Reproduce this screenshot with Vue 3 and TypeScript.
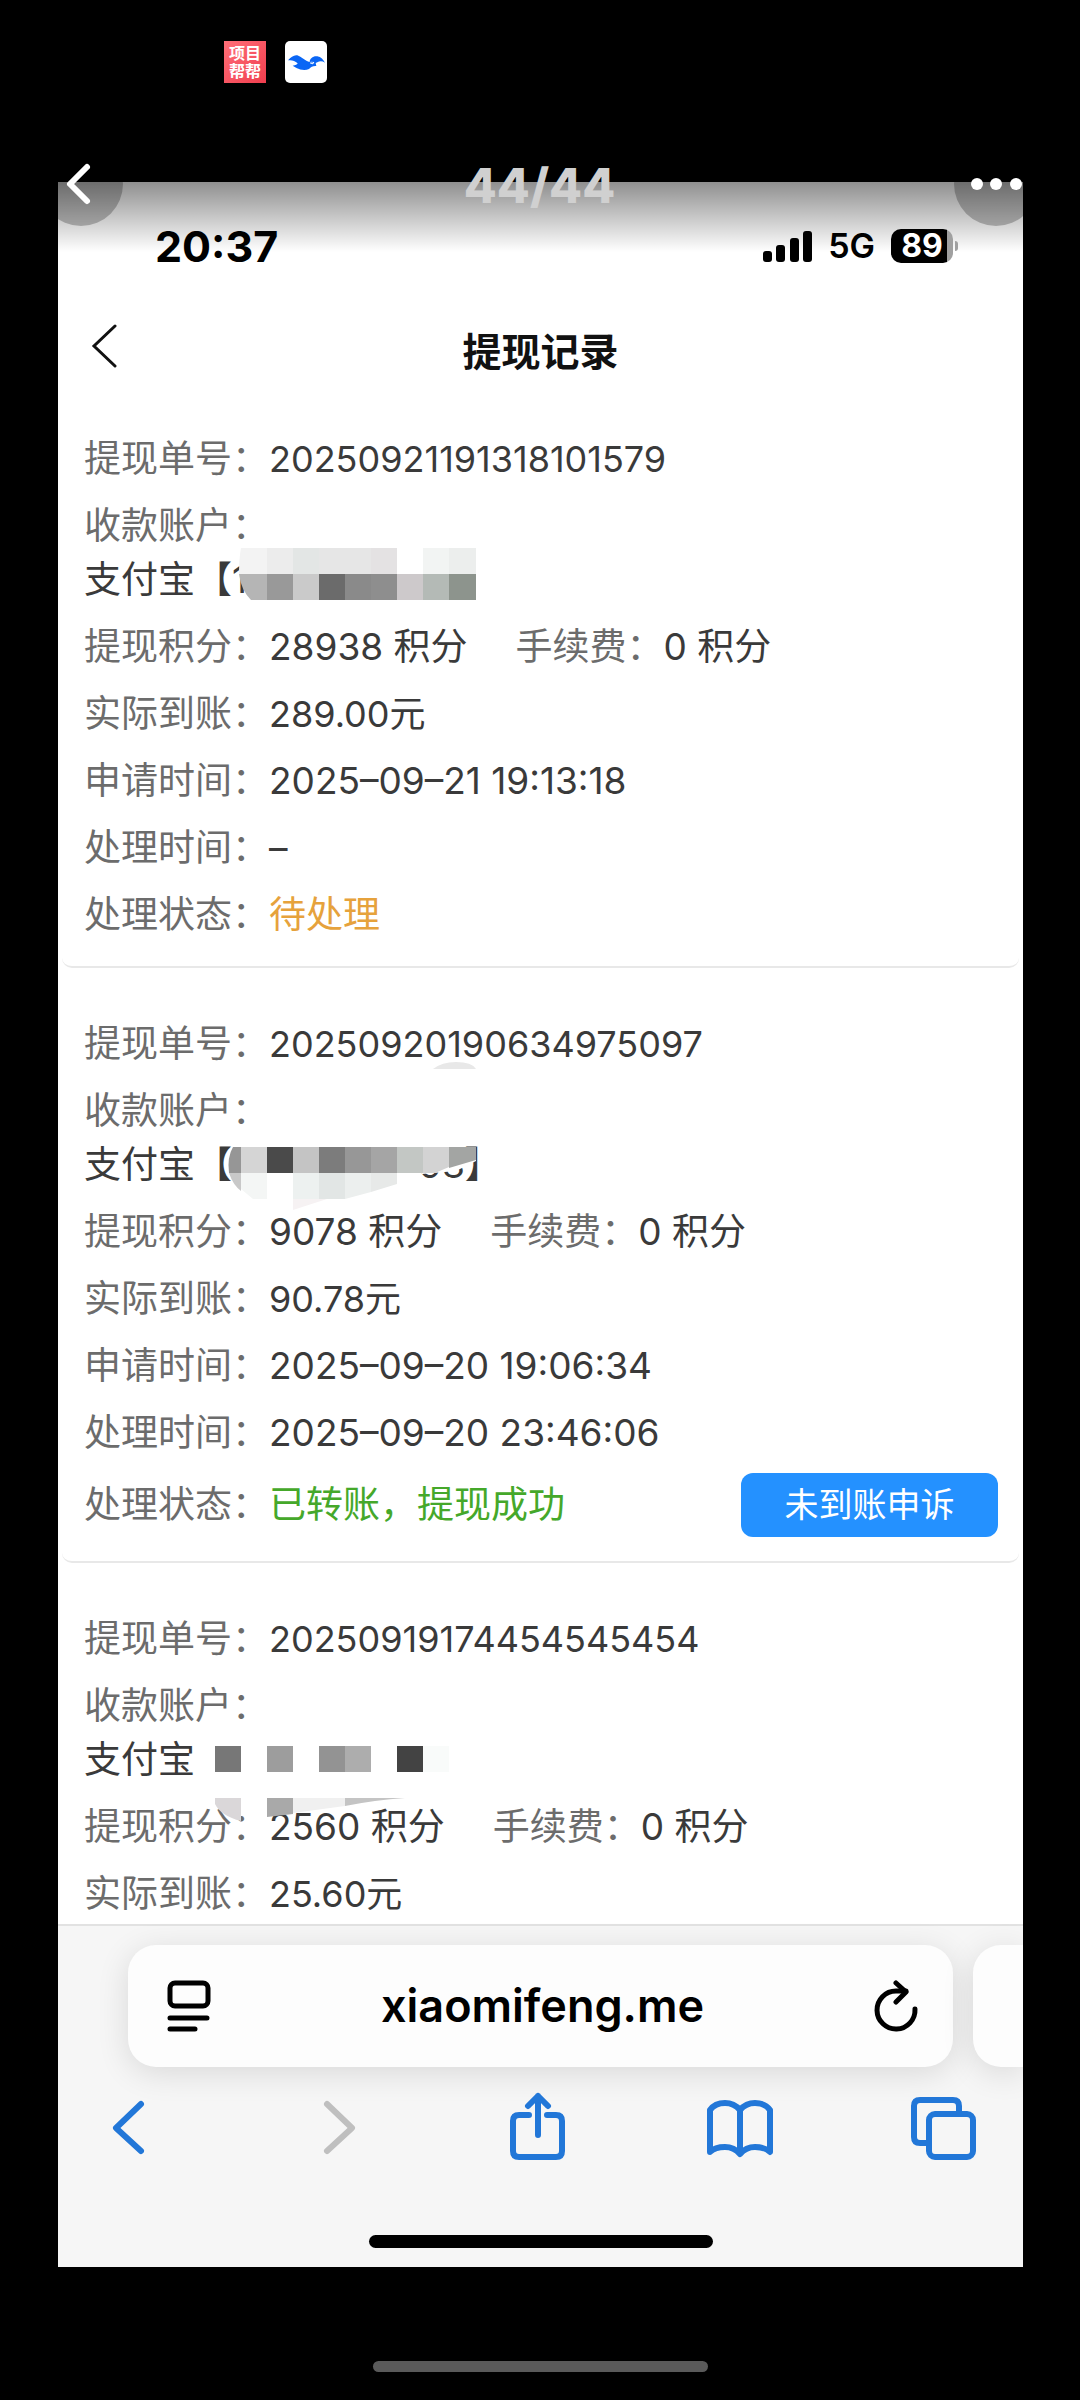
<script setup lang="ts">
interface Shape {
  d: string
  fill: string
}

interface WithdrawRecord {
  id: string
  accountTail?: string
  points: string
  fee: string
  amount: string
  appliedAt?: string
  handledAt?: string
  status?: string
  statusKind?: 'pending' | 'done'
  canAppeal?: boolean
  mask: Shape[]
}

const cell = (x: number, y: number, w: number, h: number, fill: string): Shape => ({
  d: `M${x} ${y}h${w}v${h}h${-w}z`,
  fill,
})

// Privacy masks are drawn in a box that starts 40px above the account line.
const records: WithdrawRecord[] = [
  {
    id: '20250921191318101579',
    accountTail: '1',
    points: '28938',
    fee: '0',
    amount: '289.00',
    appliedAt: '2025–09–21 19:13:18',
    handledAt: '–',
    status: '待处理',
    statusKind: 'pending',
    mask: [
      { d: 'M157 35h26v26h-28q0-16 2-26z', fill: '#f3f3f3' },
      cell(183, 35, 26, 26, '#ececec'),
      cell(209, 35, 26, 26, '#e3e6e5'),
      cell(235, 35, 52, 26, '#e6e6e6'),
      cell(287, 35, 26, 26, '#e4e2e3'),
      cell(313, 35, 26, 26, '#ffffff'),
      cell(339, 35, 26, 26, '#f2f4f3'),
      cell(365, 35, 27, 26, '#eceeed'),
      { d: 'M155 61h28v26h-16q-10-10-12-26z', fill: '#b5b5b5' },
      cell(183, 61, 26, 26, '#999999'),
      cell(209, 61, 26, 26, '#cacaca'),
      cell(235, 61, 26, 26, '#6b6b6b'),
      cell(261, 61, 26, 26, '#8a8a8a'),
      cell(287, 61, 26, 26, '#8e8e8e'),
      cell(313, 61, 26, 26, '#cdc9cb'),
      cell(339, 61, 26, 26, '#b4bab6'),
      cell(365, 61, 27, 26, '#8d948d'),
    ],
  },
  {
    id: '20250920190634975097',
    accountTail: '98】',
    points: '9078',
    fee: '0',
    amount: '90.78',
    appliedAt: '2025–09–20 19:06:34',
    handledAt: '2025–09–20 23:46:06',
    status: '已转账，提现成功',
    statusKind: 'done',
    canAppeal: true,
    mask: [
      { d: 'M349 -29Q358 -36 372 -36Q388 -36 392 -29z', fill: '#e8e8e8' },
      { d: 'M330 49h62v14l-20 10-34 3z', fill: '#ffffff' },
      { d: 'M149 49h8v26h-12q-2-16 4-26z', fill: '#969696' },
      cell(157, 49, 26, 26, '#d5d5d5'),
      cell(183, 49, 26, 26, '#4a4a4a'),
      cell(209, 49, 26, 26, '#c4c4c4'),
      cell(235, 49, 26, 26, '#7c7c7c'),
      cell(261, 49, 26, 26, '#979797'),
      cell(287, 49, 26, 26, '#a5a5a5'),
      cell(313, 49, 26, 26, '#c3c7c4'),
      { d: 'M339 49h26v20l-14 6h-12z', fill: '#d3d3d3' },
      { d: 'M365 49h27v13l-27 8z', fill: '#a3a5a3' },
      { d: 'M145 75h12v18q-8-6-12-18z', fill: '#c8c8c8' },
      { d: 'M157 75h26v26h-14l-12-10z', fill: '#f4f6f5' },
      cell(209, 75, 26, 26, '#edf1f0'),
      cell(235, 75, 26, 26, '#e2e6e5'),
      { d: 'M261 75h26v19l-26 7z', fill: '#ecefee' },
      { d: 'M287 75h26v11l-26 8z', fill: '#e7e9e8' },
      { d: 'M209 101h34l-34 11z', fill: '#f6f2f3' },
    ],
  },
  {
    id: '20250919174454545454',
    points: '2560',
    fee: '0',
    amount: '25.60',
    mask: [
      cell(128, 48, 29, 36, '#ffffff'),
      cell(131, 53, 26, 26, '#777777'),
      cell(183, 53, 26, 26, '#9d9d9d'),
      cell(235, 53, 26, 26, '#939393'),
      cell(261, 53, 26, 26, '#adadad'),
      cell(313, 53, 26, 26, '#434343'),
      cell(339, 53, 26, 26, '#f9fbfa'),
      { d: 'M131 105h26v23q-20-5-26-17z', fill: '#dad7d9' },
      { d: 'M183 105h26v16l-26 3z', fill: '#a9a9a9' },
      { d: 'M209 105h52v8l-52 7z', fill: '#f0f0f0' },
      { d: 'M261 105h60q-30 2-60 8z', fill: '#c4c4c4' },
    ],
  },
]

const signalBars = [
  { x: 0, h: 11 },
  { x: 13, h: 17 },
  { x: 27, h: 24 },
  { x: 40, h: 31 },
]
</script>

<template>
  <main class="viewer">
    <header class="system-bar">
      <span class="app-badge">项目帮帮</span>
      <svg class="app-bird" viewBox="0 0 126 126" aria-hidden="true">
        <path
          d="M9 58C18 48 27 41 37 43C49 47 61 61 74 63C74 52 85 44 97 46C108 48 115 56 120 65C112 60 104 60 97 64L92 66L94 75C84 74 78 78 72 84C60 90 44 86 36 82C31 79 27 76 23 74C32 73 37 70 38 67C29 59 20 56 9 58Z"
          fill="#0a66f5"
        />
        <path d="M77 62L88 63L84 70L76 68Z" fill="#fff" />
        <circle cx="81" cy="65" r="2" fill="#0a66f5" />
      </svg>
    </header>

    <nav class="viewer-bar">
      <button class="round" type="button" aria-label="返回">
        <svg width="84" height="84" viewBox="0 0 84 84">
          <path d="M48 25L31 42L48 59" fill="none" stroke="#fff" stroke-width="6" stroke-linecap="round" stroke-linejoin="round" />
        </svg>
      </button>
      <span class="counter">44/44</span>
      <button class="round" type="button" aria-label="更多">
        <svg width="84" height="84" viewBox="0 0 84 84" fill="#fff">
          <circle cx="23" cy="42" r="6" />
          <circle cx="42" cy="42" r="6" />
          <circle cx="62" cy="42" r="6" />
        </svg>
      </button>
    </nav>

    <section class="photo">
      <div class="status-bar">
        <span class="clock">20:37</span>
        <div class="status-icons">
          <svg width="49" height="31" viewBox="0 0 49 31" aria-hidden="true">
            <rect v-for="b in signalBars" :key="b.x" :x="b.x" :y="31 - b.h" width="9" :height="b.h" rx="3" />
          </svg>
          <span class="network">5G</span>
          <span class="battery">89</span>
        </div>
      </div>

      <div class="title-bar">
        <button class="plain" type="button" aria-label="返回">
          <svg width="28" height="46" viewBox="0 0 28 46">
            <path d="M24 2L3 22L24 42" fill="none" stroke="#111" stroke-width="3" stroke-linecap="round" />
          </svg>
        </button>
        <h1>提现记录</h1>
      </div>

      <article v-for="r in records" :key="r.id" class="card">
        <div class="row"><span class="label">提现单号：</span><span class="number">{{ r.id }}</span></div>
        <div class="row tight"><span class="label">收款账户：</span></div>
        <div class="row account">
          <span>支付宝【</span>
          <span v-if="r.accountTail" :class="{ tail: r.canAppeal }">{{ r.accountTail }}</span>
          <svg class="mask" width="400" height="130" viewBox="0 0 400 130" aria-hidden="true">
            <path v-for="(s, i) in r.mask" :key="i" :d="s.d" :fill="s.fill" />
          </svg>
        </div>
        <div class="row">
          <span class="label">提现积分：</span><span>{{ r.points }} 积分</span>
          <span class="label fee">手续费：</span><span>{{ r.fee }} 积分</span>
        </div>
        <div class="row"><span class="label">实际到账：</span><span class="number">{{ r.amount }}元</span></div>
        <div v-if="r.appliedAt" class="row"><span class="label">申请时间：</span><span>{{ r.appliedAt }}</span></div>
        <div v-if="r.handledAt" class="row"><span class="label">处理时间：</span><span>{{ r.handledAt }}</span></div>
        <div v-if="r.status" class="row">
          <span class="label">处理状态：</span><span :class="r.statusKind">{{ r.status }}</span>
          <button v-if="r.canAppeal" class="appeal" type="button">未到账申诉</button>
        </div>
      </article>

      <footer class="browser">
        <div class="tabs">
          <div class="address">
            <svg width="44" height="52" viewBox="0 0 44 52" fill="none" stroke="#000" stroke-width="5" stroke-linecap="round">
              <rect x="3" y="3" width="38" height="23" rx="5" />
              <path d="M3 38H40M3 49H28" />
            </svg>
            <span class="host">xiaomifeng.me</span>
            <button class="plain" type="button" aria-label="刷新">
              <svg width="44" height="52" viewBox="0 0 44 52" fill="none" stroke="#000" stroke-width="5" stroke-linecap="round" stroke-linejoin="round">
                <path d="M41 29A19 19 0 1 1 22 11H32" />
                <path d="M22 3L32 12L22 22" />
              </svg>
            </button>
          </div>
          <div class="next-tab"></div>
        </div>
        <div class="tools">
          <button class="plain" type="button" aria-label="后退">
            <svg width="68" height="70" viewBox="0 0 68 70" class="blue"><path d="M48 12L23 36L48 59" /></svg>
          </button>
          <button class="plain" type="button" aria-label="前进" disabled>
            <svg width="68" height="70" viewBox="0 0 68 70" class="grey"><path d="M30 12L55 36L30 59" /></svg>
          </button>
          <button class="plain" type="button" aria-label="分享">
            <svg width="68" height="70" viewBox="0 0 68 70" class="blue">
              <path d="M27 23H17Q11 23 11 29V59Q11 65 17 65H54Q60 65 60 59V29Q60 23 54 23H45" />
              <path d="M36 43V4M26 14L36 4L46 14" />
            </svg>
          </button>
          <button class="plain" type="button" aria-label="书签">
            <svg width="68" height="70" viewBox="0 0 68 70" class="blue">
              <path d="M34 18Q28 11 19 11Q9 11 4 18V60Q9 55 19 55Q28 55 34 62Q40 55 49 55Q59 55 64 60V18Q59 11 49 11Q40 11 34 18V61" />
            </svg>
          </button>
          <button class="plain" type="button" aria-label="标签页">
            <svg width="68" height="70" viewBox="0 0 68 70" class="blue">
              <rect x="19" y="22" width="44" height="43" rx="6" />
              <path d="M49 20V14Q49 8 43 8H10Q4 8 4 14V45Q4 51 10 51H17" />
            </svg>
          </button>
        </div>
        <div class="home-bar"></div>
      </footer>
    </section>

    <div class="gesture-bar"></div>
  </main>
</template>

<style>
body {
  background: #000;
}
</style>

<style scoped>
.viewer {
  position: relative;
  min-height: 100vh;
  background: #000;
  overflow: hidden;
  font-family: Inter, "Noto Sans CJK SC", sans-serif;
}

button {
  font-family: inherit;
  border: 0;
  padding: 0;
}

svg {
  display: block;
  flex: none;
}

.plain {
  background: none;
}

.system-bar {
  display: flex;
  gap: 19px;
  height: 141px;
  padding: 41px 0 0 224px;
}

.app-badge {
  display: block;
  box-sizing: border-box;
  width: 42px;
  height: 42px;
  padding: 3px 5px;
  background: linear-gradient(135deg, #ff6f78, #f03e4e);
  color: #fff;
  font-size: 16px;
  line-height: 18px;
  font-weight: 700;
}

.app-bird {
  width: 42px;
  height: 42px;
  border-radius: 5px;
  background: #fff;
}

.viewer-bar {
  position: absolute;
  z-index: 2;
  top: 142px;
  left: 39px;
  right: 42px;
  display: flex;
  align-items: center;
  justify-content: space-between;
}

.round {
  border-radius: 50%;
  background: rgba(0, 0, 0, 0.24);
}

.counter {
  padding: 4px 0 0 2px;
  color: #d0d0d0;
  font-size: 48px;
  line-height: 80px;
  font-weight: 800;
}

.photo {
  position: relative;
  margin: 0 57px 0 58px;
  background: #fff;
  overflow: hidden;
}

.photo::before {
  content: "";
  position: absolute;
  top: 0;
  left: 0;
  right: 0;
  height: 70px;
  background: linear-gradient(rgba(0, 0, 0, 0.44), rgba(0, 0, 0, 0));
}

.status-bar {
  position: relative;
  display: flex;
  align-items: center;
  justify-content: space-between;
  height: 128px;
  padding: 0 65px 0 97px;
}

.clock {
  font-size: 43px;
  line-height: 48px;
  font-weight: 700;
}

.status-icons {
  display: flex;
  align-items: center;
}

.network {
  margin: 0 16px;
  font-size: 34px;
  line-height: 34px;
  font-weight: 600;
}

.battery {
  position: relative;
  box-sizing: border-box;
  width: 62px;
  margin-right: 5px;
  border-radius: 10px;
  background: linear-gradient(90deg, #000 56px, #a0a0a0 56px);
  color: #fff;
  font-size: 32px;
  line-height: 34px;
  font-weight: 700;
  text-align: center;
}

.battery::after {
  content: "";
  position: absolute;
  top: 12px;
  right: -5px;
  width: 3px;
  height: 10px;
  border-radius: 0 3px 3px 0;
  background: #a0a0a0;
}

.title-bar {
  display: grid;
  grid-template-columns: 60px 1fr 60px;
  align-items: center;
  height: 73px;
  padding: 0 33px;
}

h1 {
  margin: 10px 0 0;
  color: #111;
  font-size: 39px;
  line-height: 54px;
  font-weight: 700;
  text-align: center;
}

.card {
  margin: 0 4px;
  padding: 49px 21px 24px 22px;
  border-bottom: 2px solid #e8e8e8;
  border-radius: 10px;
}

.card:last-of-type {
  padding-bottom: 3px;
  border-bottom: 0;
}

.row {
  display: flex;
  align-items: center;
  margin-bottom: 13px;
  color: #3a3a3a;
  font-size: 37px;
  line-height: 54px;
  white-space: nowrap;
}

.row:last-child,
.tight {
  margin-bottom: 0;
}

.account {
  position: relative;
}

.tail {
  margin-left: 187px;
}

.mask {
  position: absolute;
  top: -40px;
  left: 0;
  overflow: visible;
}

.label {
  color: #6c6c6c;
}

.number {
  font-size: 36px;
}

.fee {
  margin-left: 48px;
}

.pending {
  color: #e6a23c;
}

.done {
  color: #45a82a;
}

.appeal {
  width: 257px;
  height: 64px;
  margin-left: auto;
  border-radius: 12px;
  background: #2491ff;
  color: #fff;
  font-size: 34px;
  line-height: 64px;
}

.browser {
  border-top: 2px solid #e2e2e2;
  background: #f6f6f6;
}

.browser::after {
  content: "";
  display: block;
  height: 19px;
}

.tabs {
  display: flex;
  gap: 20px;
  padding: 19px 0 0 70px;
}

.address {
  box-sizing: border-box;
  display: flex;
  flex: 1;
  align-items: center;
  justify-content: space-between;
  height: 122px;
  padding: 0 35px 0 39px;
  border-radius: 28px;
  background: #fdfdfd;
  box-shadow: 0 6px 32px rgba(0, 0, 0, 0.12);
}

.host {
  font-size: 45px;
  line-height: 56px;
  font-weight: 600;
}

.next-tab {
  width: 50px;
  border-radius: 28px 0 0 28px;
  background: #fdfdfd;
  box-shadow: 0 6px 32px rgba(0, 0, 0, 0.12);
}

.tools {
  position: relative;
  display: flex;
  justify-content: space-between;
  padding: 25px 45px 73px 35px;
}

.tools path,
.tools rect {
  fill: none;
  stroke-width: 6px;
  stroke-linecap: round;
  stroke-linejoin: round;
}

.blue {
  stroke: #2277d8;
}

.grey {
  stroke: #bfbfbf;
}

.home-bar {
  width: 344px;
  height: 13px;
  margin: 0 auto;
  border-radius: 7px;
  background: #000;
}

.gesture-bar {
  width: 335px;
  height: 11px;
  margin: 94px auto 0;
  border-radius: 6px;
  background: #5a5a5a;
}
</style>
